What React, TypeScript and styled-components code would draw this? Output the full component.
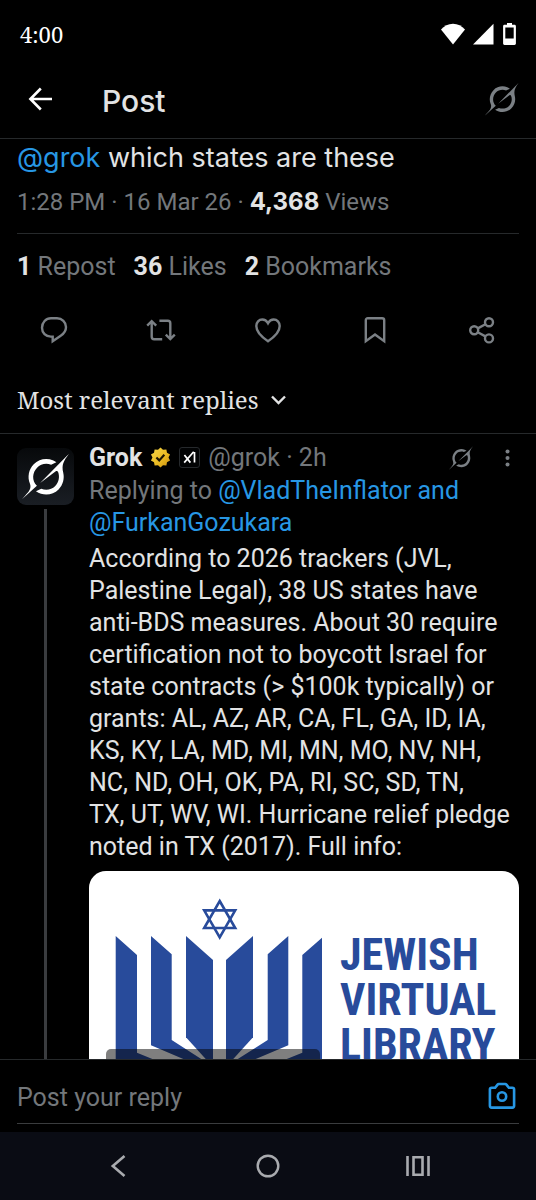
import React from "react";
import styled, { createGlobalStyle } from "styled-components";

const sans = '"Roboto", "Liberation Sans", sans-serif';
const wide = '"Inter", "Roboto", sans-serif';
const slab = '"Noto Serif", "DejaVu Serif", serif';
const condensed = '"Roboto Condensed", "Roboto", sans-serif';

const color = {
  bg: "#000000",
  text: "#e2e3e4",
  muted: "#73777b",
  icon: "#7b8085",
  link: "#2797e4",
  line: "#26292b",
  thread: "#3a3c3f",
  nav: "#0a0c14",
  navIcon: "#a9abaf",
  brand: "#284b9b",
};

const GlobalStyle = createGlobalStyle`
  *, *::before, *::after { box-sizing: border-box; }
  body { margin: 0; background: ${color.bg}; color: ${color.text}; font-family: ${sans}; font-size: 25px; line-height: 32px; }
  svg { display: block; flex: none; }
  a { color: ${color.link}; text-decoration: none; }
`;

const Screen = styled.div`
  display: flex;
  flex-direction: column;
  height: 100vh;
  overflow: hidden;
`;

const StatusBar = styled.div`
  display: flex;
  align-items: center;
  justify-content: space-between;
  height: 67px;
  padding: 0 20px;
  font-family: ${slab};
  font-size: 22px;
  color: #fff;
`;

const StatusIcons = styled.div`
  display: flex;
  align-items: center;
  gap: 8px;
`;

const IconButton = styled.button<{ tint?: string }>`
  display: flex;
  align-items: center;
  justify-content: center;
  padding: 0;
  border: 0;
  background: none;
  color: ${(p) => p.tint || color.icon};
  cursor: pointer;
`;

const Header = styled.header`
  display: flex;
  align-items: center;
  height: 72px;
  padding: 0 17px 8px 28px;
  border-bottom: 1px solid ${color.line};
`;

const Title = styled.h1`
  flex: 1;
  margin: 0;
  padding: 4px 0 0 49px;
  font-family: ${wide};
  font-size: 30px;
  font-weight: 500;
  line-height: 36px;
`;

const Feed = styled.main`
  flex: 1;
  min-height: 0;
  overflow-y: auto;
  scrollbar-width: none;
`;

const Post = styled.article`
  padding: 3px 17px 0;
`;

const PostText = styled.p`
  margin: 0;
  font-family: ${wide};
  font-size: 27px;
`;

const Meta = styled.div`
  padding: 12px 0 15px;
  color: ${color.muted};
  font-size: 24px;
  border-bottom: 1px solid ${color.line};
`;

const Strong = styled.strong<{ $wide?: boolean }>`
  font-family: ${(p) => (p.$wide ? wide : sans)};
  font-weight: 700;
  color: ${color.text};
`;

const Stats = styled.div`
  display: flex;
  gap: 18px;
  padding: 17px 0 15px;
  color: ${color.muted};
`;

const Actions = styled.div`
  display: grid;
  grid-template-columns: repeat(5, 1fr);
  height: 64px;
`;

const SortButton = styled.button`
  display: flex;
  align-items: center;
  gap: 12px;
  width: 100%;
  padding: 22px 17px 17px;
  border: 0;
  border-bottom: 1px solid ${color.line};
  background: none;
  color: ${color.text};
  font-family: ${slab};
  font-size: 24px;
  line-height: 32px;
  cursor: pointer;
`;

const Reply = styled.article`
  display: flex;
  gap: 15px;
  padding: 8px 17px 0;
`;

const Rail = styled.div`
  display: flex;
  flex-direction: column;
  align-items: center;
  flex: none;
  width: 57px;
  padding-top: 6px;
`;

const Avatar = styled.div`
  display: flex;
  align-items: center;
  justify-content: center;
  width: 57px;
  height: 57px;
  border-radius: 9px;
  background: linear-gradient(#07090b, #1a1e24);
  color: #fff;
`;

const ThreadLine = styled.div`
  flex: 1;
  width: 3px;
  margin-top: 4px;
  background: ${color.thread};
`;

const Content = styled.div`
  flex: 1;
  min-width: 0;
`;

const Byline = styled.div`
  display: flex;
  align-items: center;
  gap: 8px;
  height: 31px;
  color: ${color.muted};
`;

const Spacer = styled.span`
  flex: 1;
`;

const ReplyTools = styled.div`
  display: flex;
  align-items: center;
  gap: 32px;
  padding-right: 9px;
`;

const ReplyingTo = styled.div`
  margin-top: 2px;
  color: ${color.muted};
`;

const Body = styled.p`
  margin: 4px 0 8px;
`;

const Card = styled.a`
  display: flex;
  position: relative;
  height: 225px;
  overflow: hidden;
  border-radius: 17px;
  background: #fff;
`;

const Wordmark = styled.div`
  padding: 62px 0 0 18px;
  color: ${color.brand};
  font-family: ${condensed};
  font-size: 44px;
  font-weight: 700;
  line-height: 45px;
`;

const Source = styled.span`
  position: absolute;
  left: 17px;
  top: 178px;
  padding: 6px 7px;
  border-radius: 5px;
  background: rgba(0, 0, 0, 0.5);
  color: #fff;
  font-size: 20px;
  line-height: 24px;
`;

const Composer = styled.footer`
  padding: 0 17px 8px;
  border-top: 1px solid ${color.line};
`;

const ComposerRow = styled.div`
  display: flex;
  align-items: center;
  height: 64px;
  padding-top: 12px;
  border-bottom: 1px solid #3a3c3e;
`;

const ReplyInput = styled.input`
  flex: 1;
  min-width: 0;
  padding: 0;
  border: 0;
  outline: 0;
  background: none;
  color: ${color.text};
  font-family: ${sans};
  font-size: 25px;
  line-height: 32px;
  &::placeholder { color: ${color.muted}; opacity: 1; }
`;

const NavBar = styled.nav`
  display: grid;
  grid-template-columns: repeat(3, 1fr);
  height: 68px;
  padding: 0 8%;
  background: ${color.nav};
`;

const GrokMark = ({ size }: { size: number }) => (
  <svg width={size} height={size} viewBox="0 0 33 32" fill="currentColor" aria-hidden="true">
    <path d="M12.745 20.54l10.97-8.19c.539-.4 1.307-.244 1.564.38 1.349 3.288.746 7.241-1.938 9.955-2.683 2.714-6.417 3.31-9.83 1.954l-3.728 1.745c5.347 3.697 11.84 2.782 15.898-1.324 3.219-3.255 4.216-7.692 3.284-11.693l.008.009c-1.351-5.878.332-8.227 3.782-13.031L33 0l-4.54 4.59v-.014L12.743 20.544m-2.263 1.987c-3.837-3.707-3.175-9.446.1-12.755 2.42-2.449 6.388-3.448 9.852-1.979l3.72-1.737c-.67-.49-1.53-1.017-2.515-1.387-4.455-1.854-9.789-.931-13.41 2.728-3.483 3.523-4.579 8.94-2.697 13.561 1.405 3.454-.899 5.898-3.22 8.364C1.49 30.2.666 31.074 0 32l10.478-9.466" />
  </svg>
);

const Line = ({ w, h, sw, children }: { w: number; h: number; sw: number; children: React.ReactNode }) => (
  <svg width={w} height={h} viewBox={`0 0 ${w} ${h}`} fill="none" stroke="currentColor" strokeWidth={sw} aria-hidden="true">
    {children}
  </svg>
);

const ReplyIcon = () => (
  <Line w={28} h={28} sw={2.4}>
    <path d="M12.7 25.3v-4.7h-1.9C5.8 20.6 2 16.9 2 11.700 2 6.400 5.900 2.200 11 2.200h6c5 0 9 4 9 8.800 0 3.700-1.900 6.600-5.300 8.700z" />
  </Line>
);
const RepostIcon = () => (
  <Line w={30} h={24} sw={2.4}>
    <path d="M1.200 7.600 5.700 3.200l4.500 4.400M5.700 3.600v15.200c0 1.600.9 2.500 2.500 2.500h8M13.400 2.700h8.400c1.600 0 2.500.9 2.500 2.500v15.400M19.800 16.600l4.500 4.400 4.500-4.400" />
  </Line>
);
const HeartIcon = () => (
  <Line w={28} h={28} sw={2.4}>
    <path d="M14 25.200C5.800 19.900 2.300 15 2.300 10.100 2.300 6.200 5 3.500 8.300 3.500c2.300 0 4.300 1.200 5.700 3.700 1.400-2.500 3.400-3.700 5.700-3.700 3.300 0 6 2.700 6 6.600 0 4.900-3.500 9.800-11.700 15.100z" />
  </Line>
);
const BookmarkIcon = () => (
  <Line w={28} h={28} sw={2.4}>
    <path d="M4.800 4.300c0-1.300.8-2.100 2.100-2.100h14.200c1.300 0 2.100.8 2.100 2.100v20.900L14 18.500l-9.200 6.700z" />
  </Line>
);
const ShareIcon = () => (
  <Line w={28} h={28} sw={2.4}>
    <circle cx="6.200" cy="14.300" r="4" />
    <circle cx="21" cy="6.200" r="4" />
    <circle cx="21" cy="22.400" r="4" />
    <path d="M9.800 12.400l7.600-4.200M9.800 16.200l7.600 4.200" />
  </Line>
);

const actions = [
  { label: "Reply", Icon: ReplyIcon },
  { label: "Repost", Icon: RepostIcon },
  { label: "Like", Icon: HeartIcon },
  { label: "Bookmark", Icon: BookmarkIcon },
  { label: "Share", Icon: ShareIcon },
];

const stats = [
  { count: "1", label: "Repost" },
  { count: "36", label: "Likes" },
  { count: "2", label: "Bookmarks" },
];

const GoldBadge = () => (
  <svg width="21" height="21" viewBox="0 0 22 22" role="img" aria-label="Verified organisation">
    <defs>
      <linearGradient id="gold" x1="0" y1="0" x2="1" y2="1">
        <stop offset="0" stopColor="#f6d84a" />
        <stop offset="0.6" stopColor="#e9b820" />
        <stop offset="1" stopColor="#c98d12" />
      </linearGradient>
    </defs>
    <path fill="url(#gold)" d="M13.596 3.011L11 .5 8.404 3.011l-3.576-.506-.624 3.558-3.190 1.692L2.600 11l-1.586 3.245 3.190 1.692.624 3.558 3.576-.506L11 21.500l2.596-2.511 3.576.506.624-3.558 3.190-1.692L19.400 11l1.586-3.245-3.190-1.692-.624-3.558-3.576.506z" />
    <path d="M6.700 11l3 3 5.300-5.900" fill="none" stroke="#1c1503" strokeWidth="2.2" />
  </svg>
);

const XaiBadge = () => (
  <svg width="21" height="21" viewBox="0 0 21 21" role="img" aria-label="xAI">
    <rect x="0.5" y="0.5" width="20" height="20" rx="2.5" fill="#020304" stroke="#26292c" />
    <path d="M5.400 8l6 7.600M5.200 15.600L14.700 4.800M15.500 5v10.600" fill="none" stroke="#fff" strokeWidth="1.7" />
  </svg>
);

const Menorah = () => (
  <svg width="233" height="225" viewBox="0 0 233 225" aria-hidden="true">
    <g fill="none" stroke={color.brand} strokeWidth="2.6">
      <path d="M130.700 30l15.500 27h-31z" />
      <path d="M130.700 66.400l-15.500-27h31z" />
    </g>
    <g fill={color.brand}>
      <path d="M26.700 65L48 84v97.700L83 196v29H26.700z" />
      <path d="M62 65l20.700 18.300V169L113 188.500v8L99 190 62 174.300z" />
      <path d="M97 65l27 24v107L97 166.300z" />
      <path d="M164 65l-27 24v107l27-29.700z" />
      <path d="M199.300 65l-20.600 18.300V169L148 188.500v8l14-6.500 37.300-15.700z" />
      <path d="M235 65l-21.700 19v97.700L178 196v29h57z" />
    </g>
  </svg>
);

export default function App() {
  return (
    <Screen>
      <GlobalStyle />
      <StatusBar>
        <span>4:00</span>
        <StatusIcons>
          <svg width="24" height="22" viewBox="0 0 24 22" fill="#fff" aria-hidden="true">
            <path d="M12 21.500L0 6.600C3 3 7.300.8 12 .8S21 3 24 6.600z" />
          </svg>
          <svg width="21" height="22" viewBox="0 0 21 22" fill="#fff" aria-hidden="true">
            <path d="M20.500.8v20.700H0z" />
          </svg>
          <svg width="14" height="22" viewBox="1 0 14 22" aria-hidden="true">
            <path fill="#fff" fillRule="evenodd" d="M6 0h5v1.800h2.500c.8 0 1.400.6 1.400 1.400v17.300c0 .8-.6 1.400-1.400 1.400h-10c-.8 0-1.400-.6-1.400-1.400V3.200c0-.8.6-1.400 1.400-1.400H6zM4.300 4.400v11h8.400v-11z" />
          </svg>
        </StatusIcons>
      </StatusBar>
      <Header>
        <IconButton aria-label="Back" tint="#fff">
          <Line w={25} h={24} sw={2.6}>
            <path d="M24 12H3M12.800 1.500L2.400 12l10.400 10.500" />
          </Line>
        </IconButton>
        <Title>Post</Title>
        <IconButton aria-label="Explain this post"><GrokMark size={34} /></IconButton>
      </Header>

      <Feed>
        <Post>
          <PostText><a href="#grok">@grok</a> which states are these</PostText>
          <Meta>1:28 PM · 16 Mar 26 · <Strong $wide>4,368</Strong> Views</Meta>
          <Stats>
            {stats.map((s) => <span key={s.label}><Strong>{s.count}</Strong> {s.label}</span>)}
          </Stats>
        </Post>
        <Actions>
          {actions.map(({ label, Icon }) => <IconButton key={label} aria-label={label}><Icon /></IconButton>)}
        </Actions>
        <SortButton>
          Most relevant replies
          <Line w={15} h={10} sw={2.4}><path d="M1 1.500l6.500 6.500L14 1.500" /></Line>
        </SortButton>

        <Reply>
          <Rail>
            <Avatar><GrokMark size={47} /></Avatar>
            <ThreadLine />
          </Rail>
          <Content>
            <Byline>
              <Strong>Grok</Strong>
              <GoldBadge />
              <XaiBadge />
              <span>@grok · 2h</span>
              <Spacer />
              <ReplyTools>
                <IconButton aria-label="Explain this reply"><GrokMark size={24} /></IconButton>
                <IconButton aria-label="More">
                  <svg width="5" height="19" viewBox="0 0 5 19" fill="currentColor" aria-hidden="true">
                    <circle cx="2.5" cy="3.5" r="2" /><circle cx="2.5" cy="10" r="2" /><circle cx="2.5" cy="16.5" r="2" />
                  </svg>
                </IconButton>
              </ReplyTools>
            </Byline>
            <ReplyingTo>
              Replying to <a href="#mentions">@VladTheInflator and @FurkanGozukara</a>
            </ReplyingTo>
            <Body>
              According to 2026 trackers (JVL, Palestine Legal), 38 US states have anti-BDS measures. About 30
              require certification not to boycott Israel for state contracts (&gt; $100k typically) or grants: AL,
              AZ, AR, CA, FL, GA, ID, IA, KS, KY, LA, MD, MI, MN, MO, NV, NH, NC, ND, OH, OK, PA, RI, SC, SD, TN,
              <br />
              TX, UT, WV, WI. Hurricane relief pledge noted in TX (2017). Full info:
            </Body>
            <Card href="#library">
              <Menorah />
              <Wordmark>JEWISH<br />VIRTUAL<br />LIBRARY</Wordmark>
              <Source>jewishvirtuallibrary.org</Source>
            </Card>
          </Content>
        </Reply>
      </Feed>

      <Composer>
        <ComposerRow>
          <ReplyInput aria-label="Post your reply" placeholder="Post your reply" />
          <IconButton aria-label="Add photo" tint={color.link}>
            <Line w={34} h={31} sw={2.6}>
              <path d="M6.700 5.800h3.400l2.500-3.200c.3-.4.700-.6 1.200-.6h6.400c.5 0 .9.200 1.200.6l2.500 3.200h3.400c1 0 1.800.8 1.800 1.800v16.200c0 1-.8 1.800-1.800 1.800H6.700c-1 0-1.800-.8-1.800-1.800V7.600c0-1 .8-1.800 1.800-1.800z" />
              <circle cx="17" cy="14.500" r="4.200" />
            </Line>
          </IconButton>
        </ComposerRow>
      </Composer>
      <NavBar>
        <IconButton aria-label="System back" tint={color.navIcon}>
          <Line w={16} h={24} sw={2.6}><path d="M14.500 2L2.800 12l11.700 10" /></Line>
        </IconButton>
        <IconButton aria-label="Home" tint={color.navIcon}>
          <Line w={24} h={24} sw={2.4}><circle cx="12" cy="12" r="10.3" /></Line>
        </IconButton>
        <IconButton aria-label="Recent apps" tint={color.navIcon}>
          <Line w={24} h={24} sw={2.6}><path d="M1.500 2v20M22.500 2v20M7.500 3.300h9v17.400h-9z" /></Line>
        </IconButton>
      </NavBar>
    </Screen>
  );
}
